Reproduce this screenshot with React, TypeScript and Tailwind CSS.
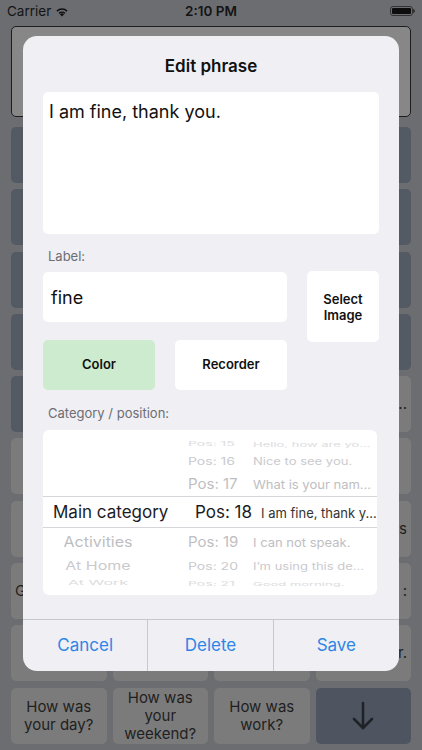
import React from 'react'

type Tile = { text?: string; dark?: boolean; align?: string }

const rows: Tile[][] = [
  [{ dark: true }, { dark: true }, { dark: true }, { dark: true }],
  [{ dark: true }, { dark: true }, { dark: true }, { dark: true }],
  [{ dark: true }, { dark: true }, { dark: true }, { dark: true }],
  [{ dark: true }, { dark: true }, { dark: true }, { dark: true }],
  [{ dark: true }, {}, {}, { text: '..', align: 'right' }],
  [{}, {}, {}, {}],
  [{ text: 'Thank you', align: 'yleft' }, {}, {}, { text: 's', align: 'right' }],
  [{ text: 'Good', align: 'left' }, {}, {}, { text: ':', align: 'right' }],
  [{}, {}, {}, { text: 'r.', align: 'right' }],
]

type WheelRow = {
  h: string
  cat?: string
  pos: string
  phrase: string
  sel?: boolean
  tone: string
  scale: string
  size: string
}

const wheel: WheelRow[] = [
  { h: 'h-[15px]', pos: 'Pos: 15', phrase: 'Hello, how are yo...', tone: 'text-[#dcdce0]', scale: 'scale-y-[0.45]', size: 'text-[14px]' },
  { h: 'h-[20px]', pos: 'Pos: 16', phrase: 'Nice to see you.', tone: 'text-[#cacace]', scale: 'scale-y-[0.75]', size: 'text-[14px]' },
  { h: 'h-[26px]', pos: 'Pos: 17', phrase: 'What is your nam...', tone: 'text-[#bebec2]', scale: 'scale-y-[0.92]', size: 'text-[15px]' },
  { h: 'h-[32px]', cat: 'Main category', pos: 'Pos: 18', phrase: 'I am fine, thank y...', sel: true, tone: 'text-[#1c1c1e]', scale: '', size: 'text-[17px]' },
  { h: 'h-[26px]', cat: 'Activities', pos: 'Pos: 19', phrase: 'I can not speak.', tone: 'text-[#bebec2]', scale: 'scale-y-[0.92]', size: 'text-[15px]' },
  { h: 'h-[22px]', cat: 'At Home', pos: 'Pos: 20', phrase: 'I\u2019m using this de...', tone: 'text-[#cacace]', scale: 'scale-y-[0.75]', size: 'text-[14px]' },
  { h: 'h-[14px]', cat: 'At Work', pos: 'Pos: 21', phrase: 'Good morning.', tone: 'text-[#dcdce0]', scale: 'scale-y-[0.4]', size: 'text-[14px]' },
]

function Wifi() {
  return (
    <svg width="14" height="11" viewBox="0 0 14 11" fill="#111">
      <path d="M7 10.5 L4.9 8.2 A3 3 0 0 1 9.1 8.2 Z" />
      <path d="M3.6 6.8 A4.9 4.9 0 0 1 10.4 6.8 L9.4 7.9 A3.5 3.5 0 0 0 4.6 7.9 Z" />
      <path d="M1.4 4.5 A8 8 0 0 1 12.6 4.5 L11.5 5.7 A6.4 6.4 0 0 0 2.5 5.7 Z" />
    </svg>
  )
}

export default function App() {
  return (
    <div
      className="relative w-[422px] h-[750px] overflow-hidden bg-[#6b6d71]"
      style={{ fontFamily: 'Inter, "Noto Sans", sans-serif' }}
    >
      {/* Status bar */}
      <div className="flex items-center justify-between h-[22px] px-[7px] text-[13.5px] text-[#141414]">
        <div className="flex items-center gap-[4px] w-[120px]">
          <span>Carrier</span>
          <Wifi />
        </div>
        <span className="font-semibold">2:10 PM</span>
        <div className="flex justify-end w-[120px]">
          <div className="flex items-center">
            <div className="w-[23px] h-[10px] rounded-[3px] border border-[#333] p-[1px]">
              <div className="w-full h-full rounded-[1px] bg-[#0d0d0d]" />
            </div>
            <div className="w-[1.5px] h-[4px] bg-[#333] rounded-r" />
          </div>
        </div>
      </div>

      {/* Dimmed app behind */}
      <div className="mx-[11px] mt-[4px] h-[91px] rounded-[5px] border border-[#1d1d1f] bg-[#878787]" />
      <div className="grid grid-cols-4 gap-x-[6px] gap-y-[6.3px] px-[11px] mt-[10px]">
        {rows.flat().map((t, i) => (
          <div
            key={i}
            className={`h-[56px] rounded-[5px] flex items-center text-[15px] text-[#1f1f1f] overflow-hidden ${t.dark ? 'bg-[#535a63]' : 'bg-[#7b7b7b]'} ${t.align === 'right' ? 'justify-end pr-[4px]' : t.align === 'left' ? 'justify-start pl-[4px]' : 'justify-center'}`}
          >
            {t.align === 'yleft' ? (
              <div className="text-center leading-[20px] pt-[10px] pl-[6px]">
                <div>Thank</div>
                <div>you</div>
              </div>
            ) : (
              <span className="whitespace-nowrap">{t.text}</span>
            )}
          </div>
        ))}
        <div className="h-[56px] rounded-[5px] bg-[#7b7b7b] flex items-center justify-center text-center text-[15px] leading-[18px] text-[#1f1f1f]">
          How was<br />your day?
        </div>
        <div className="h-[56px] rounded-[5px] bg-[#7b7b7b] flex items-center justify-center text-center text-[15px] leading-[18px] text-[#1f1f1f]">
          How was<br />your<br />weekend?
        </div>
        <div className="h-[56px] rounded-[5px] bg-[#7b7b7b] flex items-center justify-center text-center text-[15px] leading-[18px] text-[#1f1f1f]">
          How was<br />work?
        </div>
        <div className="h-[56px] rounded-[5px] bg-[#4f5560] flex items-center justify-center">
          <svg width="22" height="30" viewBox="0 0 22 30" fill="none" stroke="#1f2226" strokeWidth="2.6" strokeLinecap="round" strokeLinejoin="round">
            <path d="M11 2 V27" />
            <path d="M2 18 L11 27 L20 18" />
          </svg>
        </div>
      </div>

      {/* Modal */}
      <div className="absolute left-[23px] top-[36px] w-[376px] h-[635px] rounded-[14px] bg-[#efeff4] overflow-hidden flex flex-col">
        <div className="pt-[19px] h-[56px] text-center text-[17px] leading-[22px] font-semibold text-[#111]">
          Edit phrase
        </div>
        <div className="mx-[20px] h-[142px] rounded-[5px] bg-white px-[6px] pt-[8px] text-[18px] leading-[24px] text-[#111]">
          I am fine, thank you.
        </div>
        <div className="ml-[25px] mt-[14px] text-[13px] leading-[16px] text-[#6d6d72]">Label:</div>
        <div className="flex mx-[20px] mt-[8px]">
          <div className="w-[244px] flex flex-col">
            <div className="h-[50px] rounded-[5px] bg-white flex items-center px-[8px] text-[18px] text-[#111]">
              fine
            </div>
            <div className="flex gap-[20px] mt-[18px]">
              <div className="w-[112px] h-[50px] rounded-[5px] bg-[#cdebcf] flex items-center justify-center text-[13px] font-semibold text-[#111]">
                Color
              </div>
              <div className="w-[112px] h-[50px] rounded-[5px] bg-white flex items-center justify-center text-[13px] font-semibold text-[#111]">
                Recorder
              </div>
            </div>
          </div>
          <div className="ml-[20px] w-[72px] h-[71px] -mt-[1px] rounded-[5px] bg-white flex items-center justify-center text-center text-[13px] leading-[16px] font-semibold text-[#111]">
            Select<br />Image
          </div>
        </div>
        <div className="ml-[25px] mt-[15px] text-[13px] leading-[16px] text-[#6d6d72]">Category / position:</div>

        {/* Picker */}
        <div className="mx-[20px] w-[334px] mt-[9px] h-[165px] rounded-[6px] bg-white overflow-hidden pt-[5px]">
          {wheel.map((r, i) => (
            <div
              key={i}
              className={`flex items-center overflow-hidden leading-none ${r.h} ${r.sel ? 'border-y border-[#d6d6da]' : ''}`}
            >
              <div className={`w-[145px] whitespace-nowrap ${r.sel ? 'pl-[10px] text-left' : 'pr-[35px] text-center'}`}>
                <span className={`inline-block leading-none ${r.tone} ${r.scale} ${r.sel ? r.size : 'text-[16px]'}`}>{r.cat}</span>
              </div>
              <div className={`w-[65px] whitespace-nowrap ${r.sel ? 'pl-[7px]' : ''}`}>
                <span className={`inline-block leading-none ${r.size} ${r.tone} ${r.scale}`}>{r.pos}</span>
              </div>
              <div className={`flex-1 min-w-0 whitespace-nowrap ${r.sel ? 'pl-[8px]' : ''}`}>
                <span className={`inline-block leading-none text-[13px] ${r.sel ? 'text-[#333]' : r.tone} ${r.scale}`}>{r.phrase}</span>
              </div>
            </div>
          ))}
        </div>

        <div className="mt-auto h-[52px] border-t border-[#c8c7cc] grid grid-cols-3 text-[17px] text-[#2d86e6]">
          <div className="flex items-center justify-center border-r border-[#c8c7cc]">Cancel</div>
          <div className="flex items-center justify-center border-r border-[#c8c7cc]">Delete</div>
          <div className="flex items-center justify-center">Save</div>
        </div>
      </div>
    </div>
  )
}
